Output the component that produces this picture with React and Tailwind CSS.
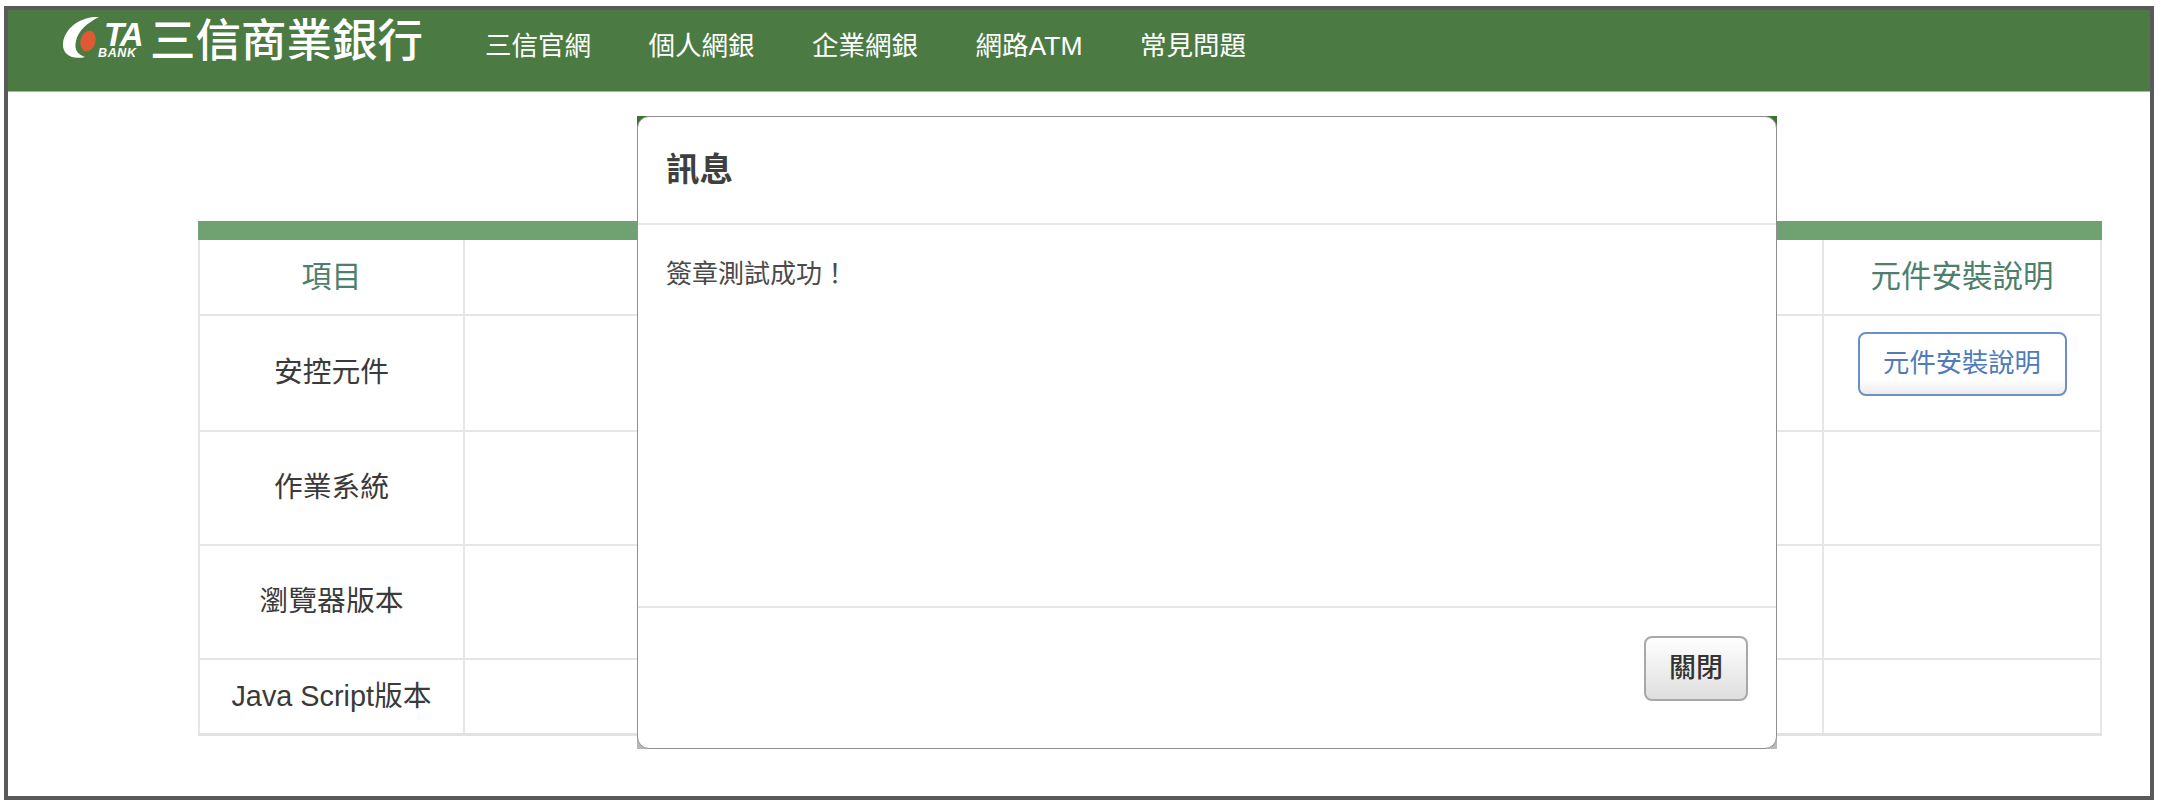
const rows = [
  { label: "安控元件", h: "h-[116px]", btn: true },
  { label: "作業系統", h: "h-[114px]" },
  { label: "瀏覽器版本", h: "h-[114px]" },
  { label: "Java Script版本", h: "h-[73px]" },
];
const nav = ["三信官網", "個人網銀", "企業網銀", "網路ATM", "常見問題"];

function Logo() {
  return (
    <div className="relative w-[93px] h-[44px] shrink-0 mt-[-1px]">
      <svg width="50" height="44" viewBox="0 0 50 44" className="absolute left-0 top-0">
        <path d="M42 0 C25 -1 8 10 6 26 C5 38 15 43 28 40 C20 37 17 32 19 24 C21 14 30 6 42 0 Z" fill="#fff" />
        <ellipse cx="31" cy="24" rx="7.5" ry="10.5" transform="rotate(15 31 24)" fill="#dd5a35" />
      </svg>
      <span className="absolute left-[47px] top-[6px] text-[33px] leading-[24px] font-bold italic text-white tracking-[-2px]">TA</span>
      <span className="absolute left-[41px] top-[32px] text-[12.5px] leading-[9px] font-bold italic text-white tracking-[0.6px]">BANK</span>
    </div>
  );
}

export default function App() {
  return (
    <div className="w-[2162px] h-[810px] bg-white pt-[6px] pl-[4px] font-['Liberation_Sans','Noto_Sans_CJK_TC',sans-serif] overflow-hidden">
      <div className="relative w-[2150px] h-[794px] border-4 border-[#5a5a5a] bg-white">
        <header className="h-[82px] bg-[#4b7b43] border-b border-[#9fbd99] flex items-start pl-[49px] pt-[8px]">
          <Logo />
          <div className="text-[45.5px] leading-[48px] font-medium text-white w-[276px] whitespace-nowrap">三信商業銀行</div>
          <nav className="flex gap-[57.5px] ml-[59px] mt-[6px]">
            {nav.map((n) => (
              <span key={n} className="text-[26.5px] leading-[44px] text-white whitespace-nowrap">{n}</span>
            ))}
          </nav>
        </header>

        <div className="ml-[190px] mt-[129px] w-[1904px] border-b-[3px] border-[#e2e2e2]">
          <div className="h-[19px] bg-[#6fa270]" />
          <div className="grid grid-cols-[265px_1fr_276px] border-r-2 border-l-2 border-[#e6e6e6]">
            <div className="h-[76px] flex items-center justify-center pb-[2px] text-[30px] text-[#4d7f6d] border-r-2 border-b-2 border-[#e6e6e6]">項目</div>
            <div className="h-[76px] border-r-2 border-b-2 border-[#e6e6e6]" />
            <div className="h-[76px] flex items-center justify-center text-[30.5px] text-[#4d7f6d] border-b-2 border-[#e6e6e6]">元件安裝說明</div>
            {rows.map((r, i) => (
              <div key={r.label} className="contents">
                <div className={`${r.h} flex items-center justify-center text-[28.8px] text-[#3a3a3a] border-r-2 border-[#e6e6e6] ${i < 3 ? "border-b-2" : ""}`}>{r.label}</div>
                <div className={`${r.h} border-r-2 border-[#e6e6e6] ${i < 3 ? "border-b-2" : ""}`} />
                <div className={`${r.h} flex items-start justify-center pt-[16px] border-[#e6e6e6] ${i < 3 ? "border-b-2" : ""}`}>
                  {r.btn && (
                    <button className="w-[209px] h-[64px] rounded-[8px] border-2 border-[#6a90c6] bg-[linear-gradient(to_bottom,#ffffff_75%,#ececec)] text-[26.3px] text-[#4f7cb8]">元件安裝說明</button>
                  )}
                </div>
              </div>
            ))}
          </div>
        </div>

        <div className="absolute left-[629px] top-[106px] w-[1140px] h-[633px] bg-[linear-gradient(to_bottom,#3f7038_50%,#b8b8b8_50%)]">
          <div className="w-full h-full flex flex-col bg-white border border-[#8f8f8f] rounded-[12px]">
            <div className="h-[108px] shrink-0 flex items-center pl-[28px] border-b-2 border-[#e6e6e6] text-[33.5px] font-bold text-[#3f3f3f]">訊息</div>
            <div className="flex-1 pl-[28px] pt-[31px] text-[26px] leading-[36px] text-[#4a4a4a]">簽章測試成功！</div>
            <div className="h-[142px] shrink-0 flex items-start justify-end pr-[28px] pt-[28px] border-t-2 border-[#e6e6e6]">
              <button className="w-[104px] h-[65px] rounded-[8px] border-2 border-[#a8a8a8] bg-[linear-gradient(to_bottom,#ffffff,#dedede)] text-[27px] font-medium text-[#333333]">關閉</button>
            </div>
          </div>
        </div>
      </div>
    </div>
  );
}
